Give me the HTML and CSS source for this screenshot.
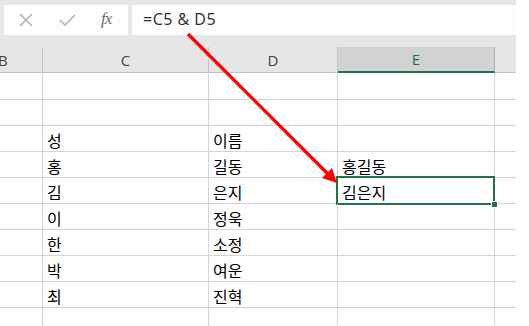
FILE: index.html
```html
<!DOCTYPE html>
<html lang="ko">
<head>
<meta charset="utf-8">
<link rel="stylesheet" href="styles.css">
</head>
<body>
<div class="app">
  <div class="fbar">
    <div class="fbtns">
      <svg class="ico" width="14" height="14" viewBox="0 0 14 14"><path d="M1 1 L13 13 M13 1 L1 13" stroke="#a9a9a9" stroke-width="1.4" fill="none"/></svg>
      <svg class="ico ok" width="18" height="14" viewBox="0 0 18 14"><path d="M1 7 L6 12 L16 2" stroke="#b5b5b5" stroke-width="1.6" fill="none"/></svg>
      <span class="fx">fx</span>
    </div>
    <div class="finput">=C5 &amp; D5</div>
  </div>
  <div class="sheet">
    <div class="h first">B</div><div class="h">C</div><div class="h">D</div><div class="h sel">E</div><div class="h last"></div>
    <div class="c"></div><div class="c"></div><div class="c"></div><div class="c"></div><div class="c last"></div>
    <div class="c"></div><div class="c"></div><div class="c"></div><div class="c"></div><div class="c last"></div>
    <div class="c"></div><div class="c">성</div><div class="c">이름</div><div class="c"></div><div class="c last"></div>
    <div class="c"></div><div class="c">홍</div><div class="c">길동</div><div class="c">홍길동</div><div class="c last"></div>
    <div class="c"></div><div class="c">김</div><div class="c">은지</div><div class="c active">김은지<span class="handle"></span></div><div class="c last"></div>
    <div class="c"></div><div class="c">이</div><div class="c">정욱</div><div class="c"></div><div class="c last"></div>
    <div class="c"></div><div class="c">한</div><div class="c">소정</div><div class="c"></div><div class="c last"></div>
    <div class="c"></div><div class="c">박</div><div class="c">여운</div><div class="c"></div><div class="c last"></div>
    <div class="c"></div><div class="c">최</div><div class="c">진혁</div><div class="c"></div><div class="c last"></div>
    <div class="c"></div><div class="c"></div><div class="c"></div><div class="c"></div><div class="c last"></div>
  </div>
  <svg class="arrow" width="529" height="326" viewBox="0 0 529 326">
    <line x1="188" y1="34" x2="329" y2="175" stroke="#ff0000" stroke-width="3.2"/>
    <path d="M337 183 L322 178 L332 168 Z" fill="#ff0000"/>
  </svg>
</div>
</body>
</html>
```
FILE: styles.css
```css
* { box-sizing: border-box; }
html, body { margin: 0; padding: 0; background: #ffffff; }
body { width: 529px; height: 326px; overflow: hidden; }
.app {
  position: relative;
  width: 516px;
  height: 326px;
  font-family: "Noto Sans CJK KR", "Noto Sans", sans-serif;
}
.fbar {
  background: #e6e6e6;
  height: 47px;
  padding: 5px 0 12px 4px;
  display: flex;
  gap: 4px;
}
.fbtns {
  width: 124px;
  background: #fdfdfd;
  display: flex;
  align-items: center;
  padding-left: 15px;
}
.ico { display: block; }
.ico.ok { margin-left: 26px; }
.fx {
  margin-left: 24px;
  font-family: "Liberation Serif", serif;
  font-style: italic;
  font-size: 17px;
  color: #6e6e6e;
  letter-spacing: -1px;
  margin-top: -2px;
}
.finput {
  flex: 1;
  background: #fdfdfd;
  font-family: "Open Sans", "Noto Sans", sans-serif;
  font-size: 16px;
  letter-spacing: 0.5px;
  color: #2b2b2b;
  padding-left: 11px;
  line-height: 29px;
}
.sheet {
  display: grid;
  grid-template-columns: 43px 166px 129px 157px 21px;
  grid-template-rows: 27px repeat(10, 26px);
  background: #ffffff;
}
.h {
  background: #e6e6e6;
  border-right: 1px solid #c4c4c4;
  border-bottom: 1px solid #c4c4c4;
  font-family: "Open Sans", "Noto Sans", sans-serif;
  font-size: 15px;
  color: #444444;
  display: flex;
  align-items: center;
  justify-content: center;
  height: 26px;
  margin-bottom: 1px;
}
.h.first { justify-content: flex-start; text-indent: -2px; }
.h.sel {
  background: #d2d2d2;
  color: #217346;
  border-right-color: #ababab;
  border-bottom: 2px solid #217346;
}
.h.last { border-right: none; }
.c {
  border-right: 1px solid #d4d4d4;
  border-bottom: 1px solid #d4d4d4;
  font-size: 16px;
  color: #000000;
  padding-left: 4px;
  line-height: 22px;
  display: flex;
  align-items: flex-end;
  position: relative;
}
.c.last { border-right: none; }
.c.active::after {
  content: "";
  position: absolute;
  left: -2px;
  top: -2px;
  right: -1px;
  bottom: -2px;
  border: 2px solid #217346;
}
.handle {
  position: absolute;
  width: 5px;
  height: 5px;
  background: #217346;
  right: -3px;
  bottom: -4px;
  z-index: 2;
  outline: 1px solid #ffffff;
}
.arrow {
  position: absolute;
  left: 0;
  top: 0;
  pointer-events: none;
}
```
